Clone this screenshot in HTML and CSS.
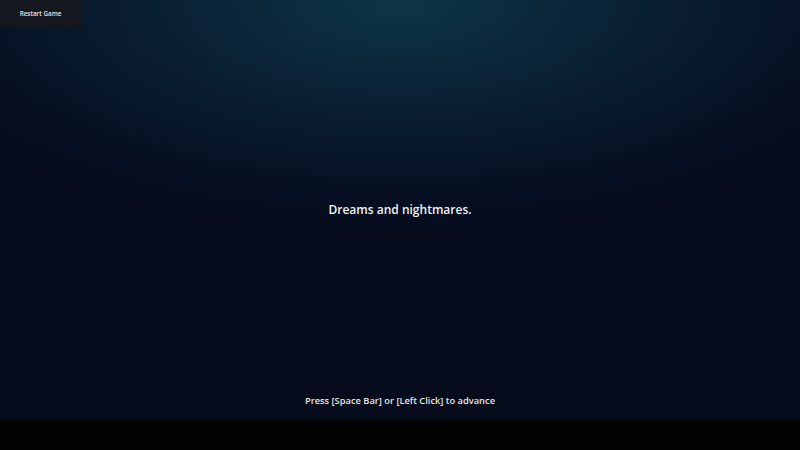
FILE: index.html
```html
<!DOCTYPE html>
<html>
<head>
<meta charset="utf-8">
<link rel="stylesheet" href="styles.css">
</head>
<body>
<div class="stage">
  <div class="topbar">
    <button class="restart">Restart Game</button>
  </div>
  <div class="story">
    <p class="line">Dreams and nightmares.</p>
  </div>
  <div class="hint">Press [Space Bar] or [Left Click] to advance</div>
</div>
<div class="footer"></div>
</body>
</html>
```
FILE: styles.css
```css
html, body {
  margin: 0;
  padding: 0;
  width: 800px;
  height: 450px;
  overflow: hidden;
  background: #000;
  font-family: "Open Sans", "Noto Sans", sans-serif;
}
.stage {
  height: 420px;
  display: flex;
  flex-direction: column;
  background: radial-gradient(ellipse 560px 240px at 50% 0, #0e3448 0%, #0a2234 40%, #060f22 80%, #050b1b 100%);
  background-color: #050b1b;
}
.topbar {
  display: flex;
  height: 27px;
}
.restart {
  width: 81px;
  height: 27px;
  border: none;
  margin: 0;
  padding: 0;
  background: #15171e;
  color: #e6e6e6;
  font-family: "Open Sans", sans-serif;
  font-size: 6.3px;
  font-weight: 600;
}
.story {
  flex: 1;
  display: flex;
  align-items: center;
  justify-content: center;
  padding-bottom: 2px;
}
.line {
  margin: 0;
  color: #f2f2f2;
  font-size: 12px;
  font-weight: 600;
}
.hint {
  height: 20px;
  text-align: center;
  color: #e6e6e6;
  font-size: 9.3px;
  font-weight: 600;
  line-height: 14px;
  margin-bottom: 6px;
}
.footer {
  height: 30px;
  background: #020202;
}
```
